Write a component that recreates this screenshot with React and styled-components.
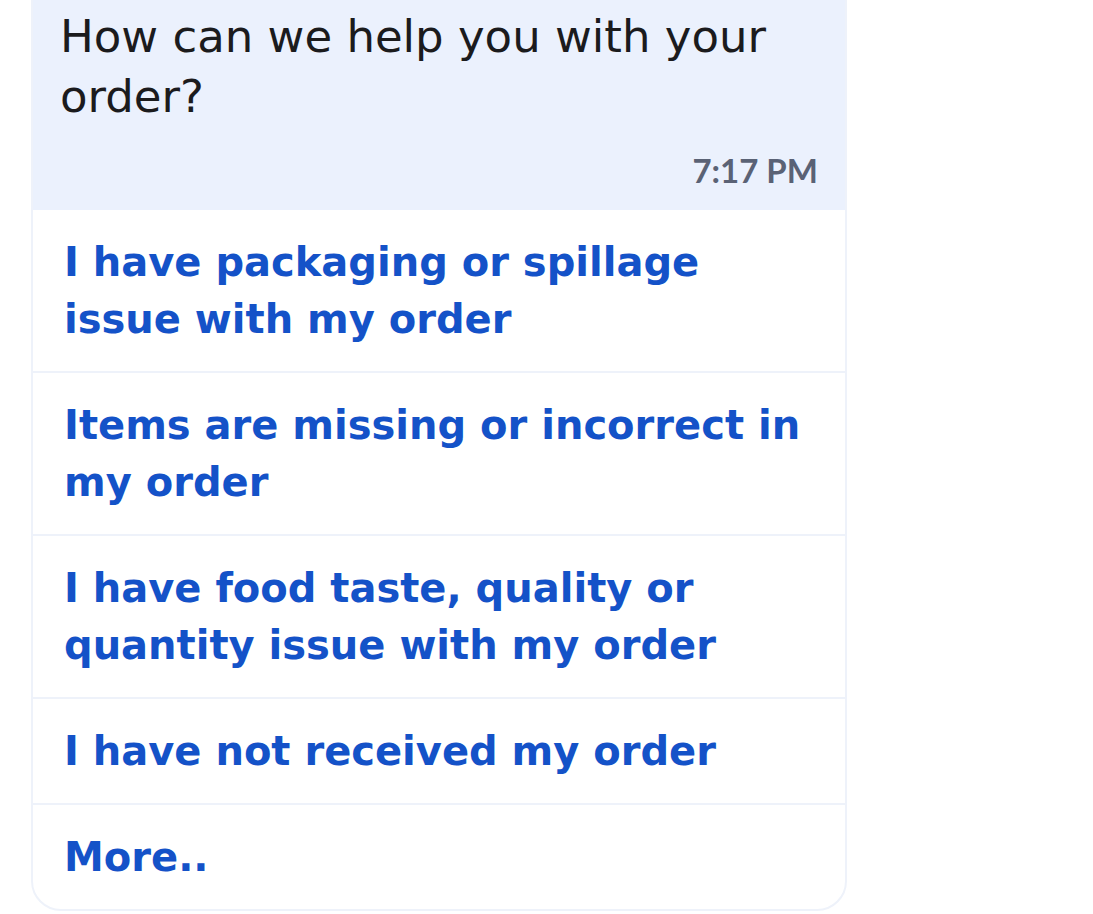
import React from "react";
import styled, { createGlobalStyle } from "styled-components";

const GlobalStyle = createGlobalStyle`
  html, body {
    margin: 0;
    padding: 0;
    background: #ffffff;
  }
  body {
    font-family: "DejaVu Sans", "Noto Sans", sans-serif;
  }
`;

const Page = styled.div`
  width: 1093px;
  height: 914px;
  overflow: hidden;
  background: #ffffff;
`;

const Card = styled.div`
  width: 816px;
  margin-left: 31px;
  margin-top: -40px;
  border: 2px solid #eef2fa;
  border-radius: 30px;
  overflow: hidden;
  background: #ffffff;
  box-sizing: border-box;
`;

const Bubble = styled.div`
  background: #ebf1fd;
  padding: 45px 27px 20px 27px;
`;

const Question = styled.div`
  font-size: 45px;
  line-height: 60px;
  color: #1b1b1d;
  font-weight: 400;
`;

const Time = styled.div`
  margin-top: 23px;
  text-align: right;
  font-family: "Lato", sans-serif;
  font-size: 33px;
  line-height: 40px;
  font-weight: 700;
  color: #5a6275;
`;

const Option = styled.div`
  padding: 24px 20px 23px 31px;
  border-top: 2px solid #eef2fa;
  font-size: 40px;
  line-height: 57px;
  font-weight: 700;
  color: #1452c8;
  &:first-of-type {
    border-top: none;
  }
`;

const options = [
  "I have packaging or spillage issue with my order",
  "Items are missing or incorrect in my order",
  "I have food taste, quality or quantity issue with my order",
  "I have not received my order",
  "More..",
];

export default function App() {
  return (
    <Page>
      <GlobalStyle />
      <Card>
        <Bubble>
          <Question>How can we help you with your order?</Question>
          <Time>7:17 PM</Time>
        </Bubble>
        <div>
          {options.map((o) => (
            <Option key={o}>{o}</Option>
          ))}
        </div>
      </Card>
    </Page>
  );
}
